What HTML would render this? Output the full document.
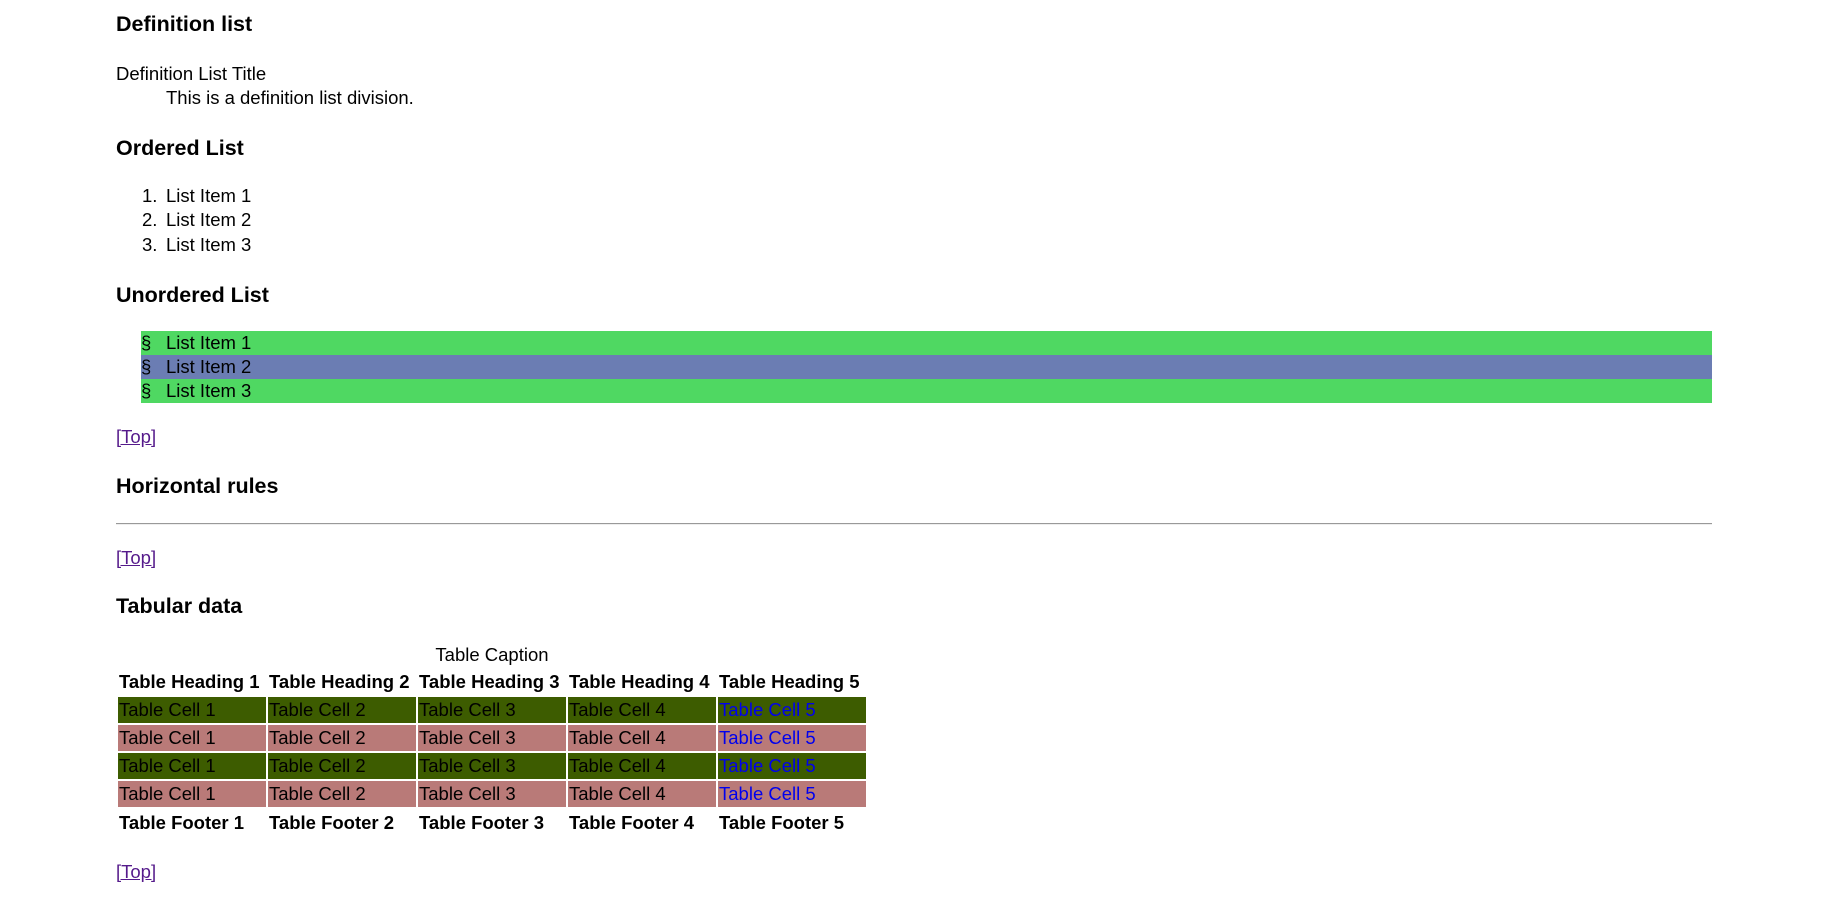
<!DOCTYPE html>
<html><head><meta charset="utf-8"><style>
body{margin:0;width:1827px;height:898px;background:#fff;font-family:"Liberation Sans",Roboto,sans-serif;color:#000;position:relative;overflow:hidden;font-size:18.5px}
.a{position:absolute;white-space:nowrap;line-height:24px}
h3{position:absolute;margin:0;font-size:21.5px;font-weight:bold;line-height:26px;white-space:nowrap}
a{color:#551a8b}
.bar{position:absolute;left:141px;width:1571px;height:24px;line-height:24px}
.bar span{position:absolute;left:0}
.bar b{font-weight:normal;position:absolute;left:25px}
hr{position:absolute;left:116px;width:1596px;top:523px;margin:0;border:0;border-top:1px solid #999;border-bottom:1px solid #eee}
table{position:absolute;left:116px;top:643px;border-spacing:2px;font-size:18.5px}
caption{line-height:24px}
td,th{width:146px;padding:0 1px;height:26px;line-height:26px;text-align:left;white-space:nowrap}
th{font-weight:bold}
.g td{background:#3d5c00}.p td{background:#b97a78}
td.l{color:#0000ee}
tfoot td{font-weight:bold;height:28px}
</style></head><body>
<h3 style="left:116px;top:11px">Definition list</h3>
<div class="a" style="left:116px;top:62px">Definition List Title</div>
<div class="a" style="left:166px;top:86px">This is a definition list division.</div>
<h3 style="left:116px;top:135px">Ordered List</h3>
<div class="a" style="left:142px;top:184px">1.</div><div class="a" style="left:166px;top:184px">List Item 1</div>
<div class="a" style="left:142px;top:208px">2.</div><div class="a" style="left:166px;top:208px">List Item 2</div>
<div class="a" style="left:142px;top:233px">3.</div><div class="a" style="left:166px;top:233px">List Item 3</div>
<h3 style="left:116px;top:282px">Unordered List</h3>
<div class="bar" style="top:331px;background:#4fd862"><span>§</span><b>List Item 1</b></div>
<div class="bar" style="top:355px;background:#6b7db3"><span>§</span><b>List Item 2</b></div>
<div class="bar" style="top:379px;background:#4fd862"><span>§</span><b>List Item 3</b></div>
<div class="a" style="left:116px;top:425px"><a href="#">[Top]</a></div>
<h3 style="left:116px;top:473px">Horizontal rules</h3>
<hr>
<div class="a" style="left:116px;top:546px"><a href="#">[Top]</a></div>
<h3 style="left:116px;top:593px">Tabular data</h3>
<table>
<caption>Table Caption</caption>
<thead><tr><th>Table Heading 1</th><th>Table Heading 2</th><th>Table Heading 3</th><th>Table Heading 4</th><th>Table Heading 5</th></tr></thead>
<tbody>
<tr class="g"><td>Table Cell 1</td><td>Table Cell 2</td><td>Table Cell 3</td><td>Table Cell 4</td><td class="l">Table Cell 5</td></tr>
<tr class="p"><td>Table Cell 1</td><td>Table Cell 2</td><td>Table Cell 3</td><td>Table Cell 4</td><td class="l">Table Cell 5</td></tr>
<tr class="g"><td>Table Cell 1</td><td>Table Cell 2</td><td>Table Cell 3</td><td>Table Cell 4</td><td class="l">Table Cell 5</td></tr>
<tr class="p"><td>Table Cell 1</td><td>Table Cell 2</td><td>Table Cell 3</td><td>Table Cell 4</td><td class="l">Table Cell 5</td></tr>
</tbody>
<tfoot><tr><td>Table Footer 1</td><td>Table Footer 2</td><td>Table Footer 3</td><td>Table Footer 4</td><td>Table Footer 5</td></tr></tfoot>
</table>
<div class="a" style="left:116px;top:860px"><a href="#">[Top]</a></div>
</body></html>
